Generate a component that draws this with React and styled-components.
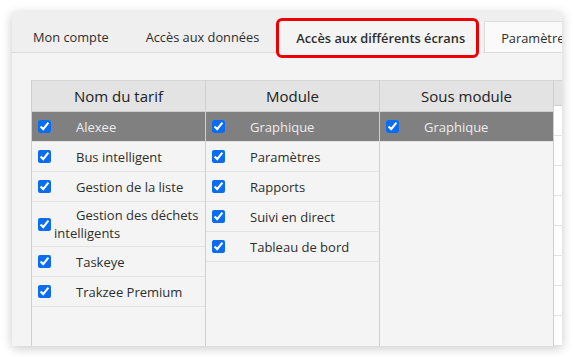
import React from "react";
import styled, { createGlobalStyle } from "styled-components";

const GlobalStyle = createGlobalStyle`
  html, body {
    margin: 0;
    background: #ffffff;
    font-family: "Open Sans", "Noto Sans", sans-serif;
    color: #2e2e2e;
  }
`;

const tabs = [
  { label: "Mon compte" },
  { label: "Accès aux données" },
  { label: "Accès aux différents écrans", active: true },
  { label: "Paramètres", boxed: true },
];

const columns = [
  {
    title: "Nom du tarif",
    rows: [
      "Alexee",
      "Bus intelligent",
      "Gestion de la liste",
      "Gestion des déchets intelligents",
      "Taskeye",
      "Trakzee Premium",
    ],
  },
  {
    title: "Module",
    rows: ["Graphique", "Paramètres", "Rapports", "Suivi en direct", "Tableau de bord"],
  },
  { title: "Sous module", rows: ["Graphique"] },
];

const App = () => {
  return (
    <>
      <GlobalStyle />
      <Page>
        <Panel>
          <TabBar>
            {tabs.map((t) => (
              <Tab key={t.label} $active={t.active} $boxed={t.boxed}>
                {t.label}
              </Tab>
            ))}
          </TabBar>
          <Content>
            <Table>
              {columns.map((col) => (
                <Column key={col.title}>
                  <Header>{col.title}</Header>
                  {col.rows.map((r, i) => (
                    <Row key={r} $selected={i === 0}>
                      <Check type="checkbox" checked readOnly />
                      <Label>{r}</Label>
                    </Row>
                  ))}
                </Column>
              ))}
              <Column $extra>
                <Header />
                {Array.from({ length: 8 }).map((_, i) => (
                  <Row key={i} $blank />
                ))}
              </Column>
            </Table>
          </Content>
        </Panel>
      </Page>
    </>
  );
};

const Page = styled.div`
  padding: 12px;
  width: 573px;
  height: 357px;
  box-sizing: border-box;
`;

const Panel = styled.div`
  width: 550px;
  height: 334px;
  background: #f4f4f4;
  box-shadow: 0 2px 10px rgba(0, 0, 0, 0.22);
  overflow: hidden;
  display: flex;
  flex-direction: column;
`;

const TabBar = styled.div`
  display: flex;
  align-items: flex-end;
  gap: 1px;
  height: 41px;
  padding: 0 0 0 3px;
  background: #efefef;
  border-bottom: 1px solid #dcdcdc;
  box-sizing: border-box;
  font-size: 12.8px;
  position: relative;
  z-index: 1;
`;

const Tab = styled.div`
  position: relative;
  display: flex;
  align-items: center;
  padding: 1px 18px 0;
  white-space: nowrap;
  color: #2e2e2e;
  font-weight: ${(p) => (p.$active ? 600 : 400)};
  background: ${(p) => (p.$active ? "#f4f4f4" : p.$boxed ? "#fafafa" : "transparent")};
  margin-bottom: ${(p) => (p.$active ? "-1px" : "0")};
  height: ${(p) => (p.$active ? "32px" : "31px")};
  border: ${(p) => (p.$boxed ? "1px solid #dcdcdc" : "none")};
  border-bottom: none;
  padding-left: ${(p) => (p.$boxed ? "16px" : "18px")};
  box-sizing: border-box;

  &::after {
    content: "";
    display: ${(p) => (p.$active ? "block" : "none")};
    position: absolute;
    left: -2px;
    right: 4px;
    top: -3px;
    bottom: -5px;
    border: 3px solid #ee0000;
    border-radius: 6px;
  }
`;

const Content = styled.div`
  flex: 1;
  padding: 27px 0 0 19px;
  min-height: 0;
`;

const Table = styled.div`
  display: flex;
  height: 100%;
  border-left: 1px solid #cfcfcf;
`;

const Column = styled.div`
  flex: none;
  width: 173px;
  border-right: 1px solid #cfcfcf;
  background: ${(p) => (p.$extra ? "#ffffff" : "#f4f4f4")};
  display: flex;
  flex-direction: column;
`;

const Header = styled.div`
  height: 32px;
  display: flex;
  align-items: center;
  justify-content: center;
  background: #e3e3e3;
  border-bottom: 1px solid #cfcfcf;
  border-top: 1px solid #d6d6d6;
  box-sizing: border-box;
  font-size: 15px;
  color: #222;
`;

const Row = styled.div`
  display: flex;
  align-items: center;
  padding: 4px 6px;
  box-sizing: content-box;
  min-height: 21px;
  border-bottom: 1px solid #e2e2e2;
  background: ${(p) => (p.$selected ? "#808080" : "transparent")};
  color: ${(p) => (p.$selected ? "#ececec" : "#2e2e2e")};
  font-size: 13px;
  line-height: 18px;
`;

const Check = styled.input`
  margin: 0 3px 0 0;
  width: 13px;
  height: 13px;
  flex: none;
  accent-color: #0b6cf0;
`;

const Label = styled.div`
  text-indent: 22px;
`;

export default App;
